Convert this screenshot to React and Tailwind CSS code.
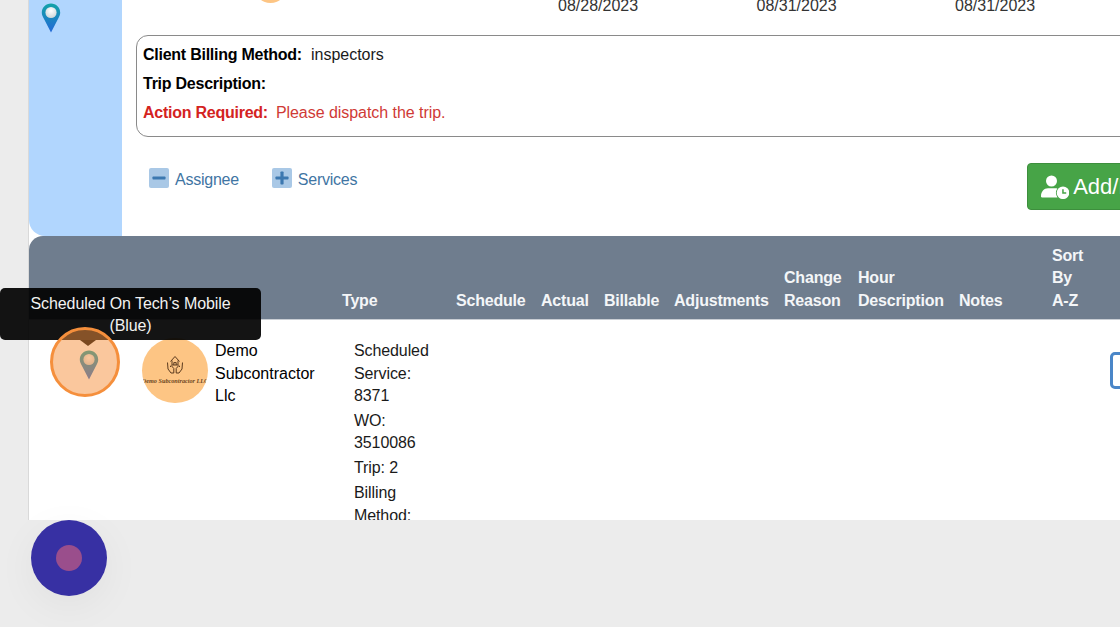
import React from "react";

const font = { fontFamily: '"Liberation Sans", Arial, sans-serif' };

function BluePin({ id }) {
  return (
    <svg width="20" height="30" viewBox="0 0 20 30" className="block">
      <defs>
        <linearGradient id={`${id}g`} x1="0" y1="0" x2="0" y2="1">
          <stop offset="0" stopColor="#12a3a8" />
          <stop offset="1" stopColor="#2468d8" />
        </linearGradient>
        <radialGradient id={`${id}w`} cx="0.5" cy="0.35" r="0.7">
          <stop offset="0" stopColor="#ffffff" />
          <stop offset="1" stopColor="#c9d3d6" />
        </radialGradient>
      </defs>
      <path d="M10 .5C4.800.5.800 4.600.800 9.600c0 2 .6 3.600 1.700 5.400L10 29.500 17.500 15c1.100-1.800 1.700-3.400 1.700-5.400C19.200 4.600 15.200.5 10 .5Z" fill={`url(#${id}g)`} />
      <circle cx="10" cy="9.500" r="5.600" fill={`url(#${id}w)`} />
    </svg>
  );
}

function LogoArt() {
  return (
    <svg width="24" height="24" viewBox="0 0 24 24" fill="none" stroke="#5b3a1e" strokeWidth="1" className="block">
      <path d="M7.500 8.500 12 3.500l4.500 5M9 7.500V12h6V7.500" />
      <path d="M10.800 12v-2.400h2.400V12" />
      <path d="M4.500 9.500 5 16l3 4h2.800v-4.500L8.200 12.500 7.200 14" />
      <path d="M19.500 9.500 19 16l-3 4h-2.800v-4.500l2.600-3 1 1.500" />
    </svg>
  );
}

function Toggle({ kind, label }) {
  return (
    <div className="flex items-start gap-[6px]">
      <span className="flex h-[20px] w-[20px] items-center justify-center rounded-[2px] bg-[#a9c8e6]">
        <svg width="14" height="14" viewBox="0 0 15 15" fill="#3c78b0">
          <rect x="0.500" y="5.800" width="14" height="3.400" rx="0.800" />
          {kind === "plus" && <rect x="5.800" y="0.500" width="3.400" height="14" rx="0.800" />}
        </svg>
      </span>
      <span className="mt-[1px] text-[16px] leading-[22px] tracking-[-0.25px] text-[#3f75a3]">{label}</span>
    </div>
  );
}

function Head({ w, children }) {
  return <div className={`${w} shrink-0 text-[16px] leading-[22.500px] font-bold tracking-[-0.2px] text-[#f4f6f8]`}>{children}</div>;
}

export default function App() {
  return (
    <div style={font} className="relative flex h-[627px] w-[1120px] flex-col overflow-hidden bg-[#ececec] text-black">
      <div className="ml-[28px] h-[520px] w-[1092px] shrink-0 overflow-hidden border-l border-[#d9d9d9] bg-white">
        <div className="flex h-[236px] w-[1091px]">
          <div className="w-[93px] shrink-0 rounded-bl-[16px] bg-[#b1d6fe] pt-[3px] pl-[12px]">
            <BluePin id="a" />
          </div>
          <div className="min-w-0 flex-1 overflow-hidden">
            <div className="relative flex h-[12px] items-end overflow-hidden text-[16px] leading-[12px] text-[#333333]">
              <div className="w-[436px] shrink-0" />
              <div className="w-[198.500px] shrink-0">08/28/2023</div>
              <div className="w-[198.500px] shrink-0">08/31/2023</div>
              <div className="w-[198.500px] shrink-0">08/31/2023</div>
              <div className="absolute top-[-30px] left-[132px] h-[33px] w-[33px] rounded-full bg-[#fdc584]" />
            </div>
            <div className="mt-[23px] ml-[14px] flex h-[102px] w-[1100px] flex-col rounded-tl-[12px] rounded-bl-[12px] border border-[#8a8a8a] pt-[9px] pl-[6px] text-[16px] leading-[20px]">
              <div className="flex h-[29px] gap-[9px]">
                <b className="tracking-[-0.25px]">Client Billing Method:</b>
                <span className="text-[#1a1a1a]">inspectors</span>
              </div>
              <div className="flex h-[29px]">
                <b className="tracking-[-0.25px]">Trip Description:</b>
              </div>
              <div className="flex h-[29px] gap-[8px]">
                <b className="tracking-[-0.25px] text-[#d4231f]">Action Required:</b>
                <span className="tracking-[-0.05px] text-[#cf3a36]">Please dispatch the trip.</span>
              </div>
            </div>
            <div className="flex items-start">
              <div className="mt-[31px] ml-[27px] flex gap-[33px]">
                <Toggle kind="minus" label="Assignee" />
                <Toggle kind="plus" label="Services" />
              </div>
              <div className="mt-[26px] ml-[670px] flex h-[47px] w-[160px] shrink-0 items-center gap-[4px] rounded-[4px] border border-[#3d8f3d] bg-[#47a447] pl-[13px] text-[22px] text-white">
                <svg width="28" height="24" viewBox="0 0 28 24" fill="#ffffff" className="shrink-0">
                  <circle cx="10.500" cy="6" r="5.500" />
                  <path d="M1 22.500c-.8 0-1-.6-1-1.200C0 16.500 3 13.200 7 13.200h7c.8 0 1.600.1 2.300.4a8 8 0 0 0 .2 8.900H1Z" />
                  <path fillRule="evenodd" d="M22 11.500a6.300 6.300 0 1 1 0 12.600 6.300 6.300 0 0 1 0-12.600Zm-.8 2.800v4.500h4v-1.500h-2.500v-3h-1.500Z" />
                </svg>
                <span>Add/Edit</span>
              </div>
            </div>
          </div>
        </div>

        <div className="flex h-[84px] w-[1110px] items-end rounded-tl-[14px] border-b border-[#c9ced4] bg-[#6f7d8e] pb-[7px] pl-[313px]">
          <Head w="w-[114px]">Type</Head>
          <Head w="w-[85px]">Schedule</Head>
          <Head w="w-[63px]">Actual</Head>
          <Head w="w-[70px]">Billable</Head>
          <Head w="w-[110px]">Adjustments</Head>
          <Head w="w-[74px]">Change<br />Reason</Head>
          <Head w="w-[101px]">Hour<br />Description</Head>
          <Head w="w-[93px]">Notes</Head>
          <Head w="w-[60px]">Sort<br />By<br />A-Z</Head>
        </div>

        <div className="flex w-[1091px] items-start">
          <div className="mt-[30px] ml-[50px] w-[20px] shrink-0">
            <BluePin id="b" />
          </div>
          <div className="mt-[18px] ml-[43px] flex h-[65px] w-[66px] shrink-0 flex-col items-center justify-center overflow-hidden rounded-full bg-[#fdc584] pb-[4px]">
            <LogoArt />
            <span className="text-[6.200px] leading-[8px] font-bold whitespace-nowrap text-[#6b4522] italic" style={{ fontFamily: '"Liberation Serif", serif' }}>
              Demo Subcontractor LLC
            </span>
          </div>
          <div className="mt-[20px] ml-[7px] w-[139px] shrink-0 text-[16px] leading-[22.500px]">
            Demo<br />Subcontractor<br />Llc
          </div>
          <div className="mt-[20px] w-[756px] shrink-0 text-[16px] leading-[22.500px] tracking-[-0.1px] text-[#1a1a1a]">
            <div className="mb-[2px]">Scheduled<br />Service:<br />8371</div>
            <div className="mb-[2px]">WO:<br />3510086</div>
            <div className="mb-[3px]">Trip: 2</div>
            <div>Billing<br />Method:</div>
          </div>
          <div className="mt-[32px] h-[37px] w-[40px] shrink-0 rounded-[5px] border-[3px] border-[#4a86c8] bg-white" />
        </div>
      </div>

      <div className="ml-[31px] h-[76px] w-[76px] shrink-0">
        <div className="flex h-[76px] w-[76px] items-center justify-center rounded-full bg-[#3730a3] shadow-[0_10px_40px_rgba(0,0,0,0.05)]">
          <div className="h-[26px] w-[26px] rounded-full bg-[#9a4e8c]" />
        </div>
      </div>

      <div className="absolute top-[288px] left-0 flex h-[52px] w-[261px] flex-col items-center rounded-[5px] bg-[rgba(0,0,0,0.92)] pt-[5px] text-[16px] leading-[22px] tracking-[-0.08px] text-[#f2f2f2]">
        <span>Scheduled On Tech’s Mobile</span>
        <span>(Blue)</span>
        <div className="absolute top-[52px] left-[80px] h-0 w-0 border-x-[8px] border-t-[6px] border-x-transparent border-t-black" />
      </div>

      <div className="absolute top-[327px] left-[50px] h-[70px] w-[70px] rounded-full border-[3px] border-[#f58f3c] bg-[rgba(245,143,60,0.5)]" />
    </div>
  );
}
